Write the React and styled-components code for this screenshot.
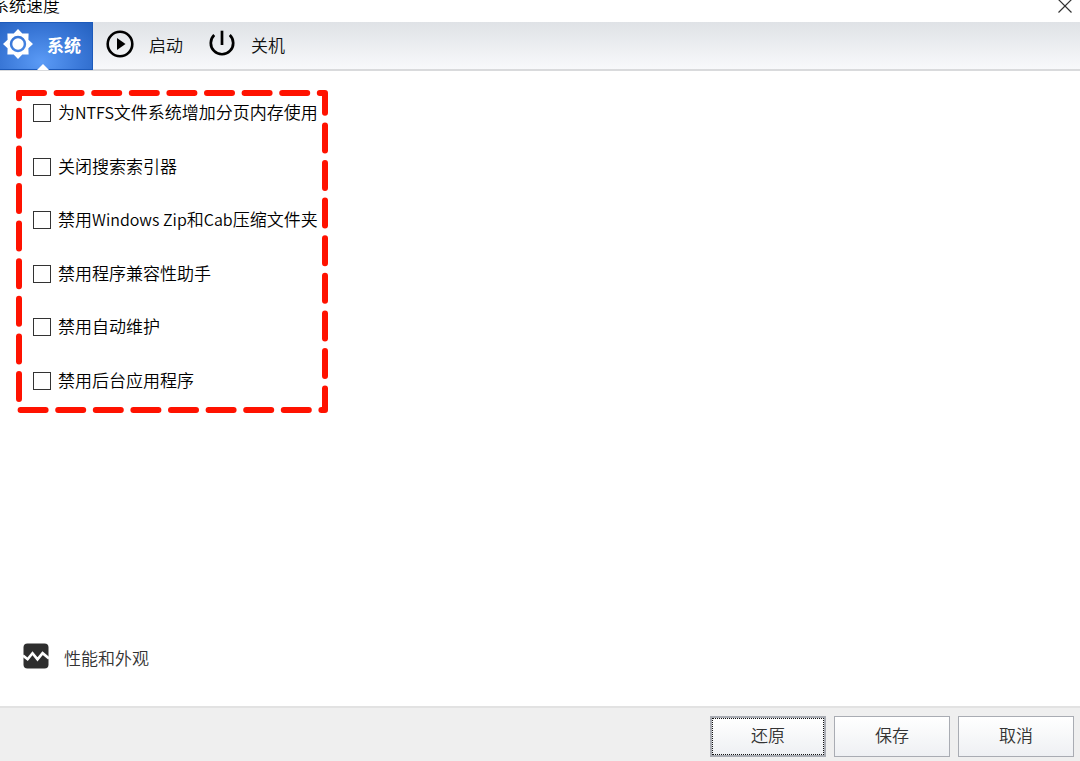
import styled, { createGlobalStyle } from "styled-components";
import { useState } from "react";


const GlobalStyle = createGlobalStyle`
    * { box-sizing: border-box; }
    body { margin: 0; background: #fff; overflow: hidden; }
    body, button, input { font-family: "Open Sans", "Noto Sans CJK SC", sans-serif; font-weight: 350; }
`

const Window = styled.div`display: flex; flex-direction: column; min-height: 100vh; overflow: hidden; color: #000; font-size: 17px; line-height: 24px;`

const TitleBar = styled.header`display: flex; align-items: flex-start; justify-content: space-between; height: 22px;`
const Title = styled.h1`margin: -6px 0 0 -8px; font-size: 17px; font-weight: 350; line-height: 24px;`
const CloseBtn = styled.button`display: flex; margin: -2px 7px 0 0; padding: 0; border: none; background: none; cursor: pointer;`

const TabBar = styled.nav`display: flex; height: 49px; border-bottom: 2px solid #d9dadc; background: linear-gradient(#dfe2e6, #f8f9fb);`
const Tab = styled.button`
    position: relative;
    display: flex;
    align-items: center;
    gap: 15px;
    height: 48px;
    padding: 0 12px 4px 13px;
    border: none;
    background: none;
    color: #111;
    font-size: 17px;
    line-height: 24px;
    cursor: pointer;

    &[aria-current="page"] {
        gap: 14px;
        padding: 0 11px 4px 3px;
        border: 1px solid #1c5abb;
        border-left: none;
        background: radial-gradient(ellipse at 45% 85%, #5b9bf6, #3a78d8 55%, #2460bf);
        color: #fff;
        font-weight: 700;
    }

    &[aria-current="page"]::after {
        content: "";
        position: absolute;
        bottom: -1px;
        left: 37px;
        border: 6px solid transparent;
        border-top: none;
        border-bottom-color: #fff;
    }
`
const Caption = styled.span`padding-top: ${(props) => (props.$low ? "6px" : "3px")};`

const Content = styled.main`display: flex; flex: 1; flex-direction: column; align-items: flex-start; justify-content: space-between; padding: 19px 16px 35px;`
const OptionBox = styled.section`position: relative; padding: 11px 12px 20px 17px;`
const Frame = styled.svg`position: absolute; top: 0; left: 0; pointer-events: none;`
const OptionList = styled.ul`display: flex; flex-direction: column; justify-content: space-between; min-height: 292px; margin: 0; padding: 0; list-style: none;`
const Option = styled.label`display: flex; align-items: center; gap: 7px; white-space: nowrap; cursor: pointer;`
const Latin = styled.span`font-family: "Noto Sans CJK SC", sans-serif; font-size: 16px; line-height: 16px;`
const Check = styled.input`
    appearance: none;
    width: 18px;
    height: 18px;
    margin: 0;
    border: 1px solid #333;
    background: #fff;

    &:checked { background: #333; box-shadow: inset 0 0 0 3px #fff; }
`

const LookLink = styled.a`display: flex; align-items: center; gap: 15px; margin-left: 7px; color: #333; text-decoration: none;`

const Footer = styled.footer`display: flex; justify-content: flex-end; gap: 8px; padding: 8px 6px 4px; border-top: 2px solid #e2e2e2; background: #efefef;`
const FooterBtn = styled.button`
    width: 116px;
    height: 41px;
    padding: 0 0 2px;
    border: ${(props) => (props.$focused ? "2px" : "1px")} solid #a9acb3;
    outline: ${(props) => (props.$focused ? "1px dotted #111" : "none")};
    outline-offset: -3px;
    background: linear-gradient(#fff, #eef0f3);
    color: #333;
    font-size: 17px;
    line-height: 24px;
    cursor: pointer;
`


const GearIcon = () => (
    <svg width="30" height="30" viewBox="0 0 30 30" fill="#fff" aria-hidden="true">
        <path fillRule="evenodd" d="M15 0 L19.3 4.6 L25.6 4.4 L25.4 10.7 L30 15 L25.4 19.3 L25.6 25.6 L19.3 25.4 L15 30 L10.7 25.4 L4.4 25.6 L4.6 19.3 L0 15 L4.6 10.7 L4.4 4.4 L10.7 4.6 Z M15 6.8 A8.2 8.2 0 1 0 15 23.2 A8.2 8.2 0 1 0 15 6.8 Z" />
        <circle cx="15" cy="15" r="5.7" />
    </svg>
)

const PlayIcon = () => (
    <svg width="28" height="28" viewBox="0 0 28 28" aria-hidden="true">
        <circle cx="14" cy="14" r="12.3" fill="none" stroke="#000" strokeWidth="2.6" />
        <path d="M11 8 L19.5 14 L11 20 Z" />
    </svg>
)

const PowerIcon = () => (
    <svg width="28" height="28" viewBox="0 0 28 28" fill="none" stroke="#000" strokeWidth="2.7" aria-hidden="true">
        <path d="M6.2 5 A11.2 11.2 0 1 0 21.8 5" />
        <path d="M14 0.7 V15" />
    </svg>
)

const ChartIcon = () => (
    <svg width="26" height="26" viewBox="0 0 26 26" aria-hidden="true">
        <rect x="0.5" y="0.5" width="25" height="25" rx="4" fill="#2e2e2e" />
        <path d="M0 12.5 L4.6 16.2 L9.5 10.2 L14.5 16.4 L19.6 10.2 L26 15.5" fill="none" stroke="#fff" strokeWidth="2.6" />
    </svg>
)

const tabs = [
    { id: "system", text: "系统", icon: <GearIcon /> },
    { id: "startup", text: "启动", icon: <PlayIcon /> },
    { id: "shutdown", text: "关机", icon: <PowerIcon /> }
]

const options = [
    { id: "ntfs", text: <>为<Latin>NTFS</Latin>文件系统增加分页内存使用</> },
    { id: "indexer", text: "关闭搜索索引器" },
    { id: "zip", text: <>禁用<Latin>Windows Zip</Latin>和<Latin>Cab</Latin>压缩文件夹</> },
    { id: "compat", text: "禁用程序兼容性助手" },
    { id: "maintenance", text: "禁用自动维护" },
    { id: "background", text: "禁用后台应用程序" }
]


const App = () => {

    const [tab, setTab] = useState("system")
    const [checked, setChecked] = useState({})

    return (
        <>
            <GlobalStyle />
            <Window>
                <TitleBar>
                    <Title>系统速度</Title>
                    <CloseBtn aria-label="关闭">
                        <svg width="16" height="16" viewBox="0 0 16 16" stroke="#333" strokeWidth="1.2">
                            <path d="M1.5 1.5 L14.5 14.5 M14.5 1.5 L1.5 14.5" />
                        </svg>
                    </CloseBtn>
                </TitleBar>
                <TabBar>
                    {tabs.map((item) => (
                        <Tab key={item.id} aria-current={tab === item.id ? "page" : undefined} onClick={() => setTab(item.id)}>
                            {item.icon}
                            <Caption>{item.text}</Caption>
                        </Tab>
                    ))}
                </TabBar>
                <Content>
                    <OptionBox>
                        <OptionList>
                            {options.map((option) => (
                                <li key={option.id}>
                                    <Option>
                                        <Check type="checkbox" checked={!!checked[option.id]} onChange={(e) => setChecked({ ...checked, [option.id]: e.target.checked })} />
                                        <span>{option.text}</span>
                                    </Option>
                                </li>
                            ))}
                        </OptionList>
                        <Frame width="312" height="323" viewBox="0 0 312 323" fill="none" stroke="#ff1200" strokeWidth="6" strokeLinecap="round" strokeLinejoin="round" strokeDasharray="25 12.6" aria-hidden="true">
                            <path d="M3 3 H309 V320 H3 V3" />
                        </Frame>
                    </OptionBox>
                    <LookLink href="#">
                        <ChartIcon />
                        <Caption $low>性能和外观</Caption>
                    </LookLink>
                </Content>
                <Footer>
                    <FooterBtn $focused>还原</FooterBtn>
                    <FooterBtn>保存</FooterBtn>
                    <FooterBtn>取消</FooterBtn>
                </Footer>
            </Window>
        </>
    )
}

export default App
